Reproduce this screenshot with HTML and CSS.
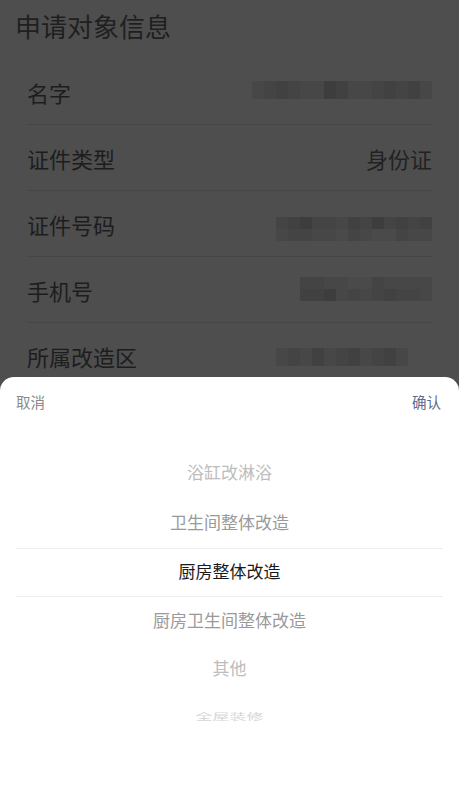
FILE: index.html
```html
<!DOCTYPE html>
<html lang="zh">
<head>
<meta charset="utf-8">
<link rel="stylesheet" href="styles.css">
</head>
<body>
<div class="page">
  <h1 class="title">申请对象信息</h1>
  <div class="list">
    <div class="row">
      <span class="label">名字</span>
      <div class="mosaic m-name">
        <i class="a"></i><i class="b"></i><i class="c"></i><i class="b"></i><i class="a"></i><i class="a"></i><i class="d"></i><i class="c"></i><i class="a"></i><i class="a"></i><i class="b"></i><i class="c"></i><i class="b"></i><i class="c"></i><i class="a"></i>
      </div>
      <span class="edge e1"></span>
    </div>
    <div class="row">
      <span class="label">证件类型</span>
      <span class="value">身份证</span>
    </div>
    <div class="row">
      <span class="label">证件号码</span>
      <div class="mosaic m-id">
        <i class="b"></i><i class="c"></i><i class="d"></i><i class="b"></i><i class="b"></i><i class="a"></i><i class="c"></i><i class="b"></i><i class="d"></i><i class="b"></i><i class="c"></i><i class="b"></i><i class="c"></i>
        <i class="a"></i><i class="b"></i><i class="b"></i><i class="a"></i><i class="a"></i><i class="e"></i><i class="b"></i><i class="a"></i><i class="e"></i><i class="e"></i><i class="b"></i><i class="a"></i><i class="a"></i>
      </div>
      <span class="edge e2"></span>
    </div>
    <div class="row">
      <span class="label">手机号</span>
      <div class="mosaic m-phone">
        <i class="b"></i><i class="b"></i><i class="a"></i><i class="a"></i><i class="e"></i><i class="e"></i><i class="b"></i><i class="a"></i><i class="a"></i><i class="a"></i><i class="a"></i>
        <i class="c"></i><i class="c"></i><i class="d"></i><i class="a"></i><i class="b"></i><i class="a"></i><i class="b"></i><i class="c"></i><i class="b"></i><i class="b"></i><i class="a"></i>
      </div>
    </div>
    <div class="row last">
      <span class="label">所属改造区</span>
      <div class="mosaic m-area">
        <i class="a"></i><i class="b"></i><i class="a"></i><i class="c"></i><i class="a"></i><i class="b"></i><i class="c"></i><i class="a"></i><i class="b"></i><i class="c"></i><i class="a"></i>
      </div>
      <span class="edge e3"></span>
    </div>
  </div>
</div>

<div class="sheet">
  <div class="sheet-head">
    <span class="cancel">取消</span>
    <span class="confirm">确认</span>
  </div>
  <div class="picker">
    <div class="item far">浴缸改淋浴</div>
    <div class="item near">卫生间整体改造</div>
    <div class="item selected">厨房整体改造</div>
    <div class="item near">厨房卫生间整体改造</div>
    <div class="item far">其他</div>
    <div class="item farthest"><span>全屋装修</span></div>
  </div>
</div>
</body>
</html>
```

FILE: styles.css
```css
* { box-sizing: border-box; }
html, body {
  margin: 0;
  padding: 0;
  width: 459px;
  height: 799px;
  overflow: hidden;
  background: #4e4e4e;
  font-family: "Noto Sans CJK SC", "Noto Sans", sans-serif;
}
.page {
  position: relative;
  height: 799px;
  color: #1d1d1d;
}
.title {
  margin: 0;
  padding: 9px 0 0 15px;
  font-size: 26px;
  font-weight: 400;
  line-height: 34px;
  color: #1f1f1f;
}
.list {
  padding: 16px 27px 0 27px;
}
.row {
  position: relative;
  display: flex;
  align-items: center;
  justify-content: space-between;
  height: 66px;
  border-bottom: 1px solid #464646;
}
.row.last { border-bottom: none; }
.label {
  font-size: 22px;
  line-height: 30px;
  color: #1d1d1d;
}
.value {
  font-size: 22px;
  line-height: 30px;
  color: #222;
}
.mosaic {
  display: grid;
  grid-auto-rows: 12px;
}
.mosaic i { display: block; }
.mosaic .a { background: #474747; }
.mosaic .b { background: #444; }
.mosaic .c { background: #414141; }
.mosaic .d { background: #3d3d3d; }
.mosaic .e { background: #4a4a4a; }
.m-name {
  grid-template-columns: repeat(15, 12px);
  grid-auto-rows: 18px;
  margin-top: -4px;
}
.m-id {
  grid-template-columns: repeat(13, 12px);
  margin-top: 10px;
}
.m-phone {
  grid-template-columns: repeat(11, 12px);
  margin-top: -2px;
}
.m-area {
  grid-template-columns: repeat(11, 12px);
  grid-auto-rows: 18px;
  margin-right: 24px;
  margin-top: 2px;
}
.edge {
  position: absolute;
  right: -29px;
  width: 2px;
  background: #a8a8a8;
}
.e1 { top: 20px; height: 21px; }
.e2 { top: 36px; height: 12px; }
.e3 { top: 9px; height: 21px; }

.sheet {
  position: absolute;
  left: 0;
  top: 377px;
  width: 459px;
  height: 422px;
  background: #fff;
  border-radius: 14px 14px 0 0;
}
.sheet-head {
  display: flex;
  justify-content: space-between;
  align-items: center;
  height: 48px;
  padding: 0 18px 0 16px;
  font-size: 14.5px;
}
.cancel { color: #888; }
.confirm { color: #5b6b8c; }
.picker {
  margin: 25px 16px 0 16px;
}
.item {
  height: 49px;
  display: flex;
  align-items: center;
  justify-content: center;
  font-size: 17px;
  color: #9a9a9a;
  padding-bottom: 4px;
}
.item.far {
  color: #bdbdbd;
  padding-bottom: 7px;
}
.item.selected {
  color: #1a1a1a;
  border-top: 1px solid #eeeeee;
  border-bottom: 1px solid #eeeeee;
}
.item.farthest {
  color: #d6d6d6;
  align-items: flex-start;
  padding-bottom: 0;
}
.item.farthest span {
  display: block;
  transform: scaleY(0.55);
  transform-origin: 50% 50%;
  margin-top: 8px;
}
```
